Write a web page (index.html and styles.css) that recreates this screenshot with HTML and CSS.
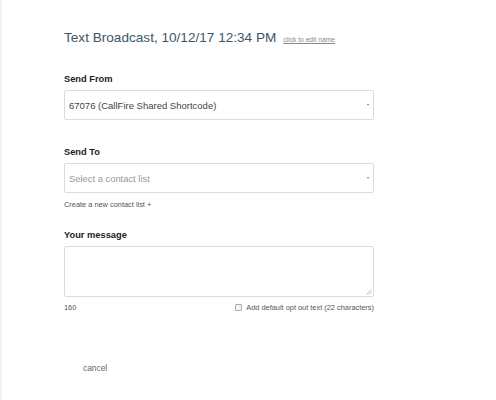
FILE: index.html
```html
<!DOCTYPE html>
<html>
<head>
<meta charset="utf-8">
<link rel="stylesheet" href="styles.css">
</head>
<body>
<div class="page">
  <div class="form">
    <div class="title-row">
      <h1 class="title">Text Broadcast, 10/12/17 12:34 PM</h1>
      <a class="edit-link">click to edit name</a>
    </div>

    <div class="field from">
      <label class="label">Send From</label>
      <div class="select">
        <span class="value">67076 (CallFire Shared Shortcode)</span>
        <span class="caret"></span>
      </div>
    </div>

    <div class="field to">
      <label class="label">Send To</label>
      <div class="select">
        <span class="placeholder">Select a contact list</span>
        <span class="caret"></span>
      </div>
      <div class="create">Create a new contact list +</div>
    </div>

    <div class="field msg">
      <label class="label">Your message</label>
      <div class="textarea">
        <svg class="grip" width="6" height="6" viewBox="0 0 6 6"><path d="M5.5 0.5 L0.5 5.5 M5.5 3 L3 5.5" stroke="#b8b8b8" stroke-width="1" fill="none"/></svg>
      </div>
      <div class="msg-foot">
        <span class="count">160</span>
        <label class="optout"><span class="checkbox"></span>Add default opt out text (22 characters)</label>
      </div>
    </div>

    <div class="actions">
      <a class="cancel">cancel</a>
    </div>
  </div>
</div>
</body>
</html>
```

FILE: styles.css
```css
html, body {
  margin: 0;
  padding: 0;
  background: #fff;
}
body {
  font-family: "Liberation Sans", Arial, sans-serif;
  color: #333;
}
.page {
  border-left: 2px solid #f2f2f2;
  height: 400px;
  box-sizing: border-box;
  overflow: hidden;
}
.form {
  width: 310px;
  padding: 29px 0 0 62px;
}
.title-row {
  display: flex;
  align-items: baseline;
  gap: 7px;
  height: 18px;
  white-space: nowrap;
}
.title {
  margin: 0;
  font-size: 13.6px;
  font-weight: normal;
  color: #3e5566;
  line-height: 18px;
}
.edit-link {
  font-size: 6.7px;
  color: #888;
  text-decoration: underline;
}
.field.from {
  margin-top: 26px;
}
.label {
  display: block;
  font-size: 9.3px;
  font-weight: bold;
  color: #222;
  line-height: 13px;
  margin-bottom: 4px;
}
.select {
  height: 30px;
  box-sizing: border-box;
  border: 1px solid #dcdcdc;
  border-radius: 2px;
  display: flex;
  align-items: center;
  justify-content: space-between;
  padding: 0 4px 0 4px;
}
.value {
  font-size: 9.5px;
  color: #444;
}
.placeholder {
  font-size: 9.4px;
  color: #999;
}
.caret {
  width: 0;
  height: 0;
  border-left: 1.5px solid transparent;
  border-right: 1.5px solid transparent;
  border-top: 2px solid #777;
}
.field.to {
  margin-top: 26px;
}
.create {
  font-size: 7.4px;
  line-height: 9px;
  color: #555;
  margin-top: 7px;
}
.field.msg {
  margin-top: 20px;
}
.textarea {
  height: 51px;
  box-sizing: border-box;
  border: 1px solid #dcdcdc;
  border-radius: 2px;
  position: relative;
}
.grip {
  position: absolute;
  right: 1px;
  bottom: 1px;
}
.msg-foot {
  display: flex;
  justify-content: space-between;
  align-items: center;
  margin-top: 6px;
  font-size: 7.4px;
  line-height: 9px;
  color: #555;
}
.optout {
  display: flex;
  align-items: center;
  gap: 4px;
}
.checkbox {
  width: 5px;
  height: 5px;
  border: 1px solid #aaa;
  border-radius: 1px;
  background: #f4f4f4;
}
.actions {
  margin-top: 49px;
  padding-left: 19px;
  line-height: 10px;
}
.cancel {
  font-size: 8.4px;
  color: #666;
}
```
